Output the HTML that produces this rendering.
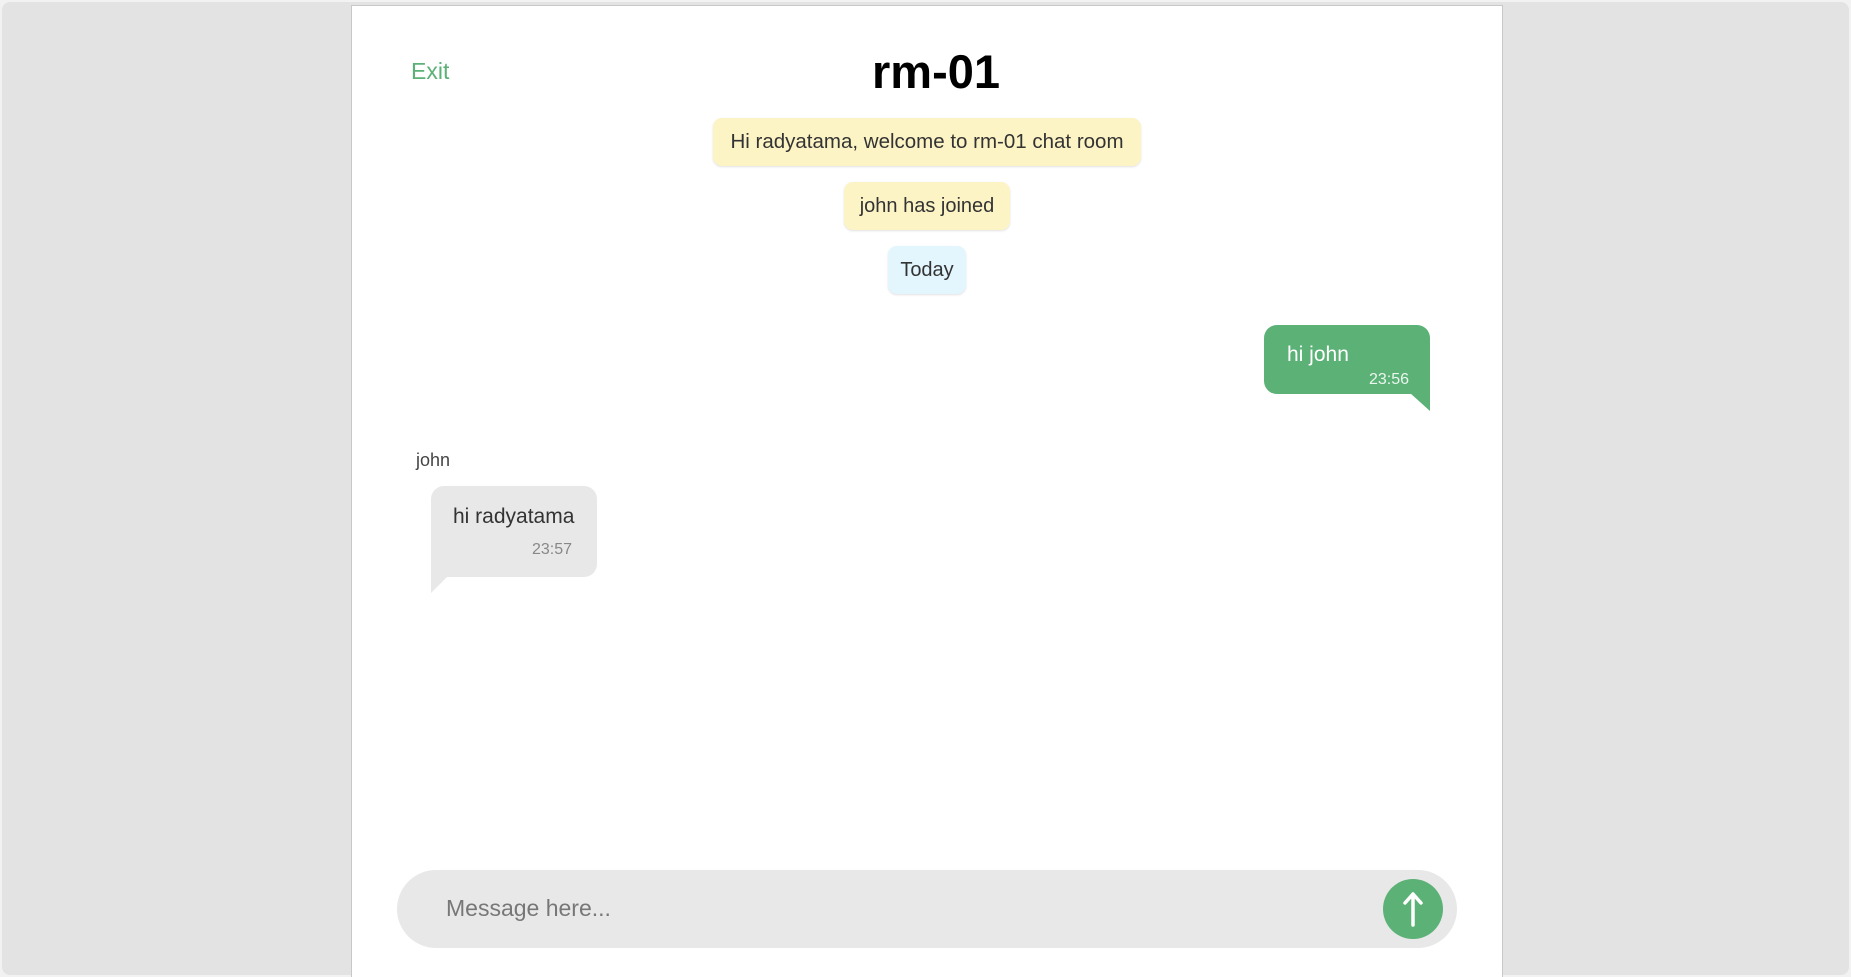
<!DOCTYPE html>
<html><head><meta charset="utf-8"><style>
*{margin:0;padding:0;box-sizing:border-box}
body{width:1851px;height:977px;background:#f2f2f2;font-family:"Liberation Sans",sans-serif;position:relative;overflow:hidden}
.outer{position:absolute;left:2px;top:2px;width:1847px;height:973px;background:#e3e3e3;border-radius:8px}
.panel{position:absolute;left:351px;top:5px;width:1152px;height:972px;background:#fff;border:1px solid #c8c8c8;border-bottom:none}
.a{position:absolute}
.pill{position:absolute;border-radius:9px;font-size:20px;color:#333;display:flex;align-items:center;justify-content:center;box-shadow:0 1px 2px rgba(0,0,0,.12)}
</style></head><body>
<div class="outer"></div>
<div class="panel"></div>
<div class="a" style="left:411px;top:58px;font-size:23px;color:#5cb176">Exit</div>
<div class="a" style="left:736px;width:400px;text-align:center;top:44px;font-size:47px;font-weight:bold;color:#000">rm-01</div>
<div class="pill" style="left:713px;top:118px;width:428px;height:48px;background:#fdf4c6;font-size:20.5px">Hi radyatama, welcome to rm-01 chat room</div>
<div class="pill" style="left:844px;top:182px;width:166px;height:48px;background:#fdf4c6">john has joined</div>
<div class="pill" style="left:888px;top:246px;width:78px;height:48px;background:#e3f5fd">Today</div>
<div class="a" style="left:1264px;top:325px;width:166px;height:69px;background:#5cb176;border-radius:13px 13px 0 13px"></div>
<svg class="a" style="left:1410px;top:393px" width="21" height="19"><polygon points="0,0 20,0 20,18" fill="#5cb176"/></svg>
<div class="a" style="left:1287px;top:343px;font-size:21px;color:#fff">hi john</div>
<div class="a" style="left:1369px;top:371px;font-size:16px;color:#eaf6ee">23:56</div>
<div class="a" style="left:416px;top:450px;font-size:18px;color:#444">john</div>
<div class="a" style="left:431px;top:486px;width:166px;height:91px;background:#e8e8e8;border-radius:13px 13px 13px 0"></div>
<svg class="a" style="left:431px;top:576px" width="20" height="18"><polygon points="0,0 17,0 0,17" fill="#e8e8e8"/></svg>
<div class="a" style="left:453px;top:505px;font-size:21px;color:#333">hi radyatama</div>
<div class="a" style="left:532px;top:541px;font-size:16px;color:#888">23:57</div>
<div class="a" style="left:397px;top:870px;width:1060px;height:78px;background:#e8e8e8;border-radius:39px"></div>
<div class="a" style="left:446px;top:895px;font-size:23px;color:#777">Message here...</div>
<div class="a" style="left:1383px;top:879px;width:60px;height:60px;border-radius:50%;background:#5cb176"></div>
<svg class="a" style="left:1383px;top:879px" width="60" height="60"><path d="M30 46V15M22 24L30 15 38 24" stroke="#fff" stroke-width="3.5" fill="none" stroke-linecap="round" stroke-linejoin="round"/></svg>
</body></html>
